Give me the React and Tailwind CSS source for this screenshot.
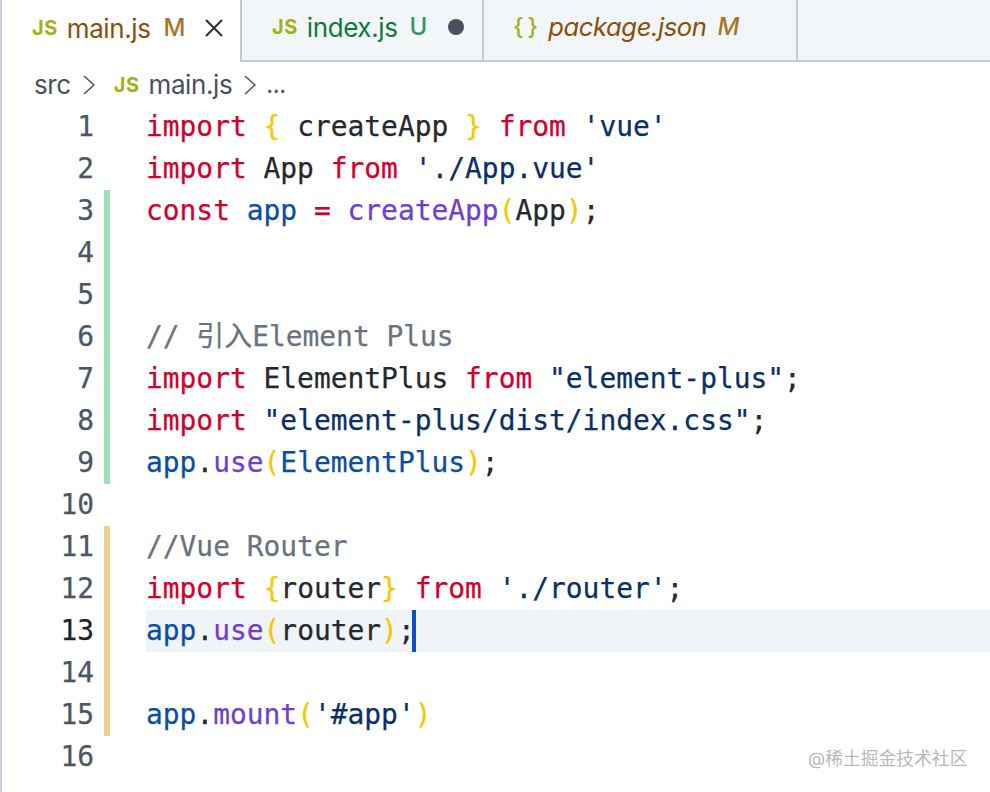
import React from "react";

const K = "text-[#d1002e]";
const B = "text-[#0a4ea3]";
const F = "text-[#6f3fd0]";
const Y = "text-[#f5c800]";
const S = "text-[#0a2f66]";
const T = "text-[#24292f]";
const C = "text-[#6a737d]";

const lines = [
  { s: [[K, "import"], [T, " "], [Y, "{"], [T, " createApp "], [Y, "}"], [T, " "], [K, "from"], [T, " "], [S, "'vue'"]] },
  { s: [[K, "import"], [T, " App "], [K, "from"], [T, " "], [S, "'./App.vue'"]] },
  { bar: "g", s: [[K, "const"], [T, " "], [B, "app"], [T, " "], [K, "="], [T, " "], [F, "createApp"], [Y, "("], [T, "App"], [Y, ")"], [T, ";"]] },
  { bar: "g", s: [] },
  { bar: "g", s: [] },
  { bar: "g", s: [[C, "// 引入Element Plus"]] },
  { bar: "g", s: [[K, "import"], [T, " ElementPlus "], [K, "from"], [T, " "], [S, '"element-plus"'], [T, ";"]] },
  { bar: "g", s: [[K, "import"], [T, " "], [S, '"element-plus/dist/index.css"'], [T, ";"]] },
  { bar: "g", s: [[B, "app"], [T, "."], [F, "use"], [Y, "("], [B, "ElementPlus"], [Y, ")"], [T, ";"]] },
  { s: [] },
  { bar: "y", s: [[C, "//Vue Router"]] },
  { bar: "y", s: [[K, "import"], [T, " "], [Y, "{"], [T, "router"], [Y, "}"], [T, " "], [K, "from"], [T, " "], [S, "'./router'"], [T, ";"]] },
  { bar: "y", active: true, s: [[B, "app"], [T, "."], [F, "use"], [Y, "("], [T, "router"], [Y, ")"], [T, ";"]] },
  { bar: "y", s: [] },
  { bar: "y", s: [[B, "app"], [T, "."], [F, "mount"], [Y, "("], [S, "'#app'"], [Y, ")"]] },
  { s: [] },
];

const mono = { fontFamily: '"DejaVu Sans Mono", "Noto Sans CJK SC", monospace' };

function Js({ className = "" }) {
  return (
    <span className={`font-bold text-[20px] leading-none text-[#a3b01c] tracking-[0.5px] ${className}`}>JS</span>
  );
}

function Tab({ children, className = "" }) {
  return <div className={`flex items-center h-full pb-[6px] ${className}`}>{children}</div>;
}

export default function App() {
  return (
    <div
      className="w-[990px] h-[792px] overflow-hidden bg-white border-l-2 border-[#c9ccdc] relative"
      style={{ fontFamily: 'Inter, "Noto Sans CJK SC", sans-serif' }}
    >
      <div className="flex h-[62px] text-[26px] tracking-[-0.4px]">
        <Tab className="w-[238px] bg-white pl-[30px]">
          <Js />
          <span className="ml-[9px] text-[#8a4f08]">main.js</span>
          <span className="ml-[13px] text-[24px] font-medium text-[#a8762a]">M</span>
          <svg className="ml-[20px]" width="18" height="18" viewBox="0 0 18 18" fill="none" stroke="#2b2f36" strokeWidth="2">
            <path d="M1 1L17 17M17 1L1 17" />
          </svg>
        </Tab>
        <Tab className="w-[244px] bg-[#f3f6f9] pl-[30px] border-l-2 border-r-2 border-b-2 border-[#c5cad8]">
          <Js />
          <span className="ml-[9px] text-[#0b7a3b]">index.js</span>
          <span className="ml-[12px] text-[24px] font-medium text-[#2f9a5a]">U</span>
          <span className="ml-[21px] w-[16px] h-[16px] rounded-full bg-[#4a505c]" />
        </Tab>
        <Tab className="w-[314px] bg-[#f3f6f9] pl-[29px] border-r-2 border-b-2 border-[#c5cad8] italic">
          <span className="text-[#a3b01c] font-medium not-italic text-[24px] tracking-[4px]">{"{}"}</span>
          <span className="ml-[6px] text-[25.6px] text-[#8a4f08]">package.json</span>
          <span className="ml-[11px] text-[24px] font-medium text-[#a8762a]">M</span>
        </Tab>
        <div className="flex-1 bg-[#f3f6f9] border-b-2 border-[#c5cad8]" />
      </div>

      <div className="flex items-center h-[43px] pt-[2px] pl-[32px] text-[26px] tracking-[-0.4px] text-[#4a505c]">
        <span>src</span>
        <svg className="ml-[12px]" width="12" height="22" viewBox="0 0 12 22" fill="none" stroke="#4a505c" strokeWidth="1.5">
          <path d="M1 2L11 11L1 20" />
        </svg>
        <Js className="ml-[19px]" />
        <span className="ml-[9px]">main.js</span>
        <svg className="ml-[12px]" width="12" height="22" viewBox="0 0 12 22" fill="none" stroke="#4a505c" strokeWidth="1.5">
          <path d="M1 2L11 11L1 20" />
        </svg>
        <span className="ml-[10px] text-[24px]">...</span>
      </div>

      <div className="text-[27.9px] leading-[42px] pt-[1px] [-webkit-text-stroke:0.25px]" style={mono}>
        {lines.map((l, i) => (
          <div key={i} className="flex h-[42px]">
            <div className={`w-[92px] text-right shrink-0 ${l.active ? "text-[#1f2328]" : "text-[#4b5563]"}`}>{i + 1}</div>
            <div
              className={`ml-[10px] w-[6px] shrink-0 ${
                l.bar === "g" ? "bg-[#9ee2b4]" : l.bar === "y" ? "bg-[#ecd28f]" : ""
              }`}
            />
            <div className={`ml-[36px] flex-1 whitespace-pre flex ${l.active ? "bg-[#f0f4f7]" : ""}`}>
              <span>
                {l.s.map((p, j) => (
                  <span key={j} className={p[0]}>{p[1]}</span>
                ))}
              </span>
              {l.active && <span className="-ml-[3px] w-[4px] h-[42px] bg-[#0b50c8]" />}
            </div>
          </div>
        ))}
      </div>

      <div className="absolute left-[806px] top-[747px] text-[17.8px] leading-[24px] text-[#b8b8b8] whitespace-nowrap">
        @稀土掘金技术社区
      </div>
    </div>
  );
}
